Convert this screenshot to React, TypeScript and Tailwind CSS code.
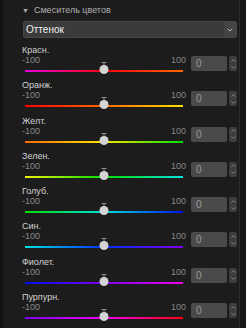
import { ChevronDown, ChevronUp } from 'lucide-react';

const rows = [
  { name: 'Красн.', grad: 'bg-[linear-gradient(90deg,#e000e0,#ff0010_50%,#ff6a00)]' },
  { name: 'Оранж.', grad: 'bg-[linear-gradient(90deg,#ff0000,#ff6a00_50%,#ffe000)]' },
  { name: 'Желт.', grad: 'bg-[linear-gradient(90deg,#ff6a00,#ffe600_50%,#00e000)]' },
  { name: 'Зелен.', grad: 'bg-[linear-gradient(90deg,#f0f000,#00e000_50%,#00e0e0)]' },
  { name: 'Голуб.', grad: 'bg-[linear-gradient(90deg,#00e000,#00e0e0_50%,#0010f0)]' },
  { name: 'Син.', grad: 'bg-[linear-gradient(90deg,#00e0e0,#0030ff_50%,#8000f0)]' },
  { name: 'Фиолет.', grad: 'bg-[linear-gradient(90deg,#0010f0,#8000f0_50%,#f000f0)]' },
  { name: 'Пурпурн.', grad: 'bg-[linear-gradient(90deg,#8000f0,#f000f0_50%,#ff0010)]' },
];

function SliderRow({ name, grad }: { name: string; grad: string }) {
  return (
    <div className="flex h-[35.3px] flex-col">
      <div className="h-[12px] pt-[1px] text-[9px] leading-[12px] text-[#d2d2d2]">{name}</div>
      <div className="flex">
        <div className="flex w-[164px] flex-col">
          <div className="flex h-[10px] justify-between text-[9px] leading-[10px] text-[#8a8a8a]">
            <span>-100</span>
            <span>100</span>
          </div>
          <div className="relative mx-[3px] mt-[5px] h-[2px]">
            <div className={`h-[2px] w-full ${grad}`} />
            <div className="absolute left-1/2 top-[-8px] flex -translate-x-1/2 flex-col items-center">
              <div className="h-[1px] w-[5px] bg-[#8c8c8c]" />
              <div className="h-[2px] w-[1px] bg-[#8c8c8c]" />
              <div className="h-[9px] w-[9px] rounded-full bg-[#d4d4d4]" />
            </div>
          </div>
        </div>
        <div className="ml-[5px] mt-[1px] flex h-[15px] gap-[2px]">
          <div className="flex w-[36px] items-center rounded-[2px] bg-[#4a4a4a] pl-[5px] text-[10px] text-[#9a9a9a]">
            0
          </div>
          <div className="flex w-[8px] flex-col items-center justify-center rounded-[2px] bg-[#3d3d3d] text-[#9a9a9a]">
            <ChevronUp size={7} strokeWidth={2.5} />
            <ChevronDown size={7} strokeWidth={2.5} />
          </div>
        </div>
      </div>
    </div>
  );
}

export default function App() {
  return (
    <div className="flex h-[328px] w-[246px] overflow-hidden bg-[#1c1c1c] font-['Liberation_Sans',sans-serif]">
      <div className="w-[3px] bg-[#121212]" />
      <div className="flex flex-1 flex-col pl-[19px] pr-[2px]">
        <div className="flex h-[21px] items-center gap-[5px] pt-[1px] text-[9px] text-[#b0b0b0]">
          <span className="text-[7px]">▼</span>
          <span>Смеситель цветов</span>
        </div>
        <div className="ml-[1px] flex h-[17px] items-center rounded-[2px] border border-[#474747] bg-[#3b3b3b]">
          <span className="flex-1 pl-[2px] text-[10px] font-medium text-[#f0f0f0]">Оттенок</span>
          <div className="flex h-full w-[12px] items-center justify-center bg-[#444]">
            <ChevronDown size={8} strokeWidth={3} className="text-[#bbb]" />
          </div>
        </div>
        <div className="mt-[5px] flex flex-col">
          {rows.map((r) => (
            <SliderRow key={r.name} {...r} />
          ))}
        </div>
      </div>
      <div className="w-[1px] bg-[#2c2c2c]" />
      <div className="w-[6px] bg-[#151515]" />
    </div>
  );
}
